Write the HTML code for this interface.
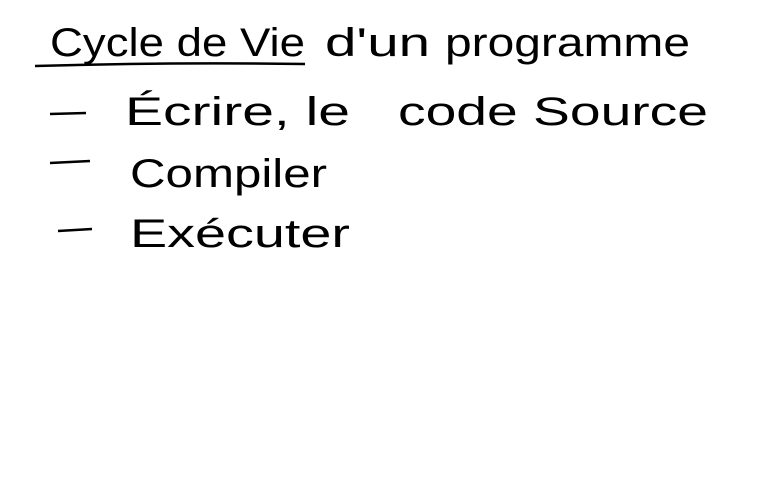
<!DOCTYPE html>
<html><head><style>
html,body{margin:0;padding:0;background:#fff;width:768px;height:480px;overflow:hidden}
svg{display:block}
text{font-family:"Liberation Sans",sans-serif;fill:#000;font-size:40px}
</style></head><body>
<svg width="768" height="480" viewBox="0 0 768 480">
<text x="50" y="56" textLength="255" lengthAdjust="spacingAndGlyphs">Cycle de Vie</text>
<text x="325" y="56" textLength="105" lengthAdjust="spacingAndGlyphs">d'un</text>
<text x="445" y="56" textLength="245" lengthAdjust="spacingAndGlyphs">programme</text>
<path d="M35 66 Q170 62 305 64" stroke="#000" stroke-width="2.5" fill="none"/>
<path d="M50 114 L86 113" stroke="#000" stroke-width="2.5"/>
<text x="125" y="125" textLength="225" lengthAdjust="spacingAndGlyphs">Écrire, le</text>
<text x="398" y="125" textLength="310" lengthAdjust="spacingAndGlyphs">code Source</text>
<path d="M50 163 L90 161" stroke="#000" stroke-width="2.5"/>
<text x="130" y="187" textLength="197" lengthAdjust="spacingAndGlyphs">Compiler</text>
<path d="M58 231 L92 229" stroke="#000" stroke-width="2.5"/>
<text x="130" y="247" textLength="220" lengthAdjust="spacingAndGlyphs">Exécuter</text>
</svg>
</body></html>
